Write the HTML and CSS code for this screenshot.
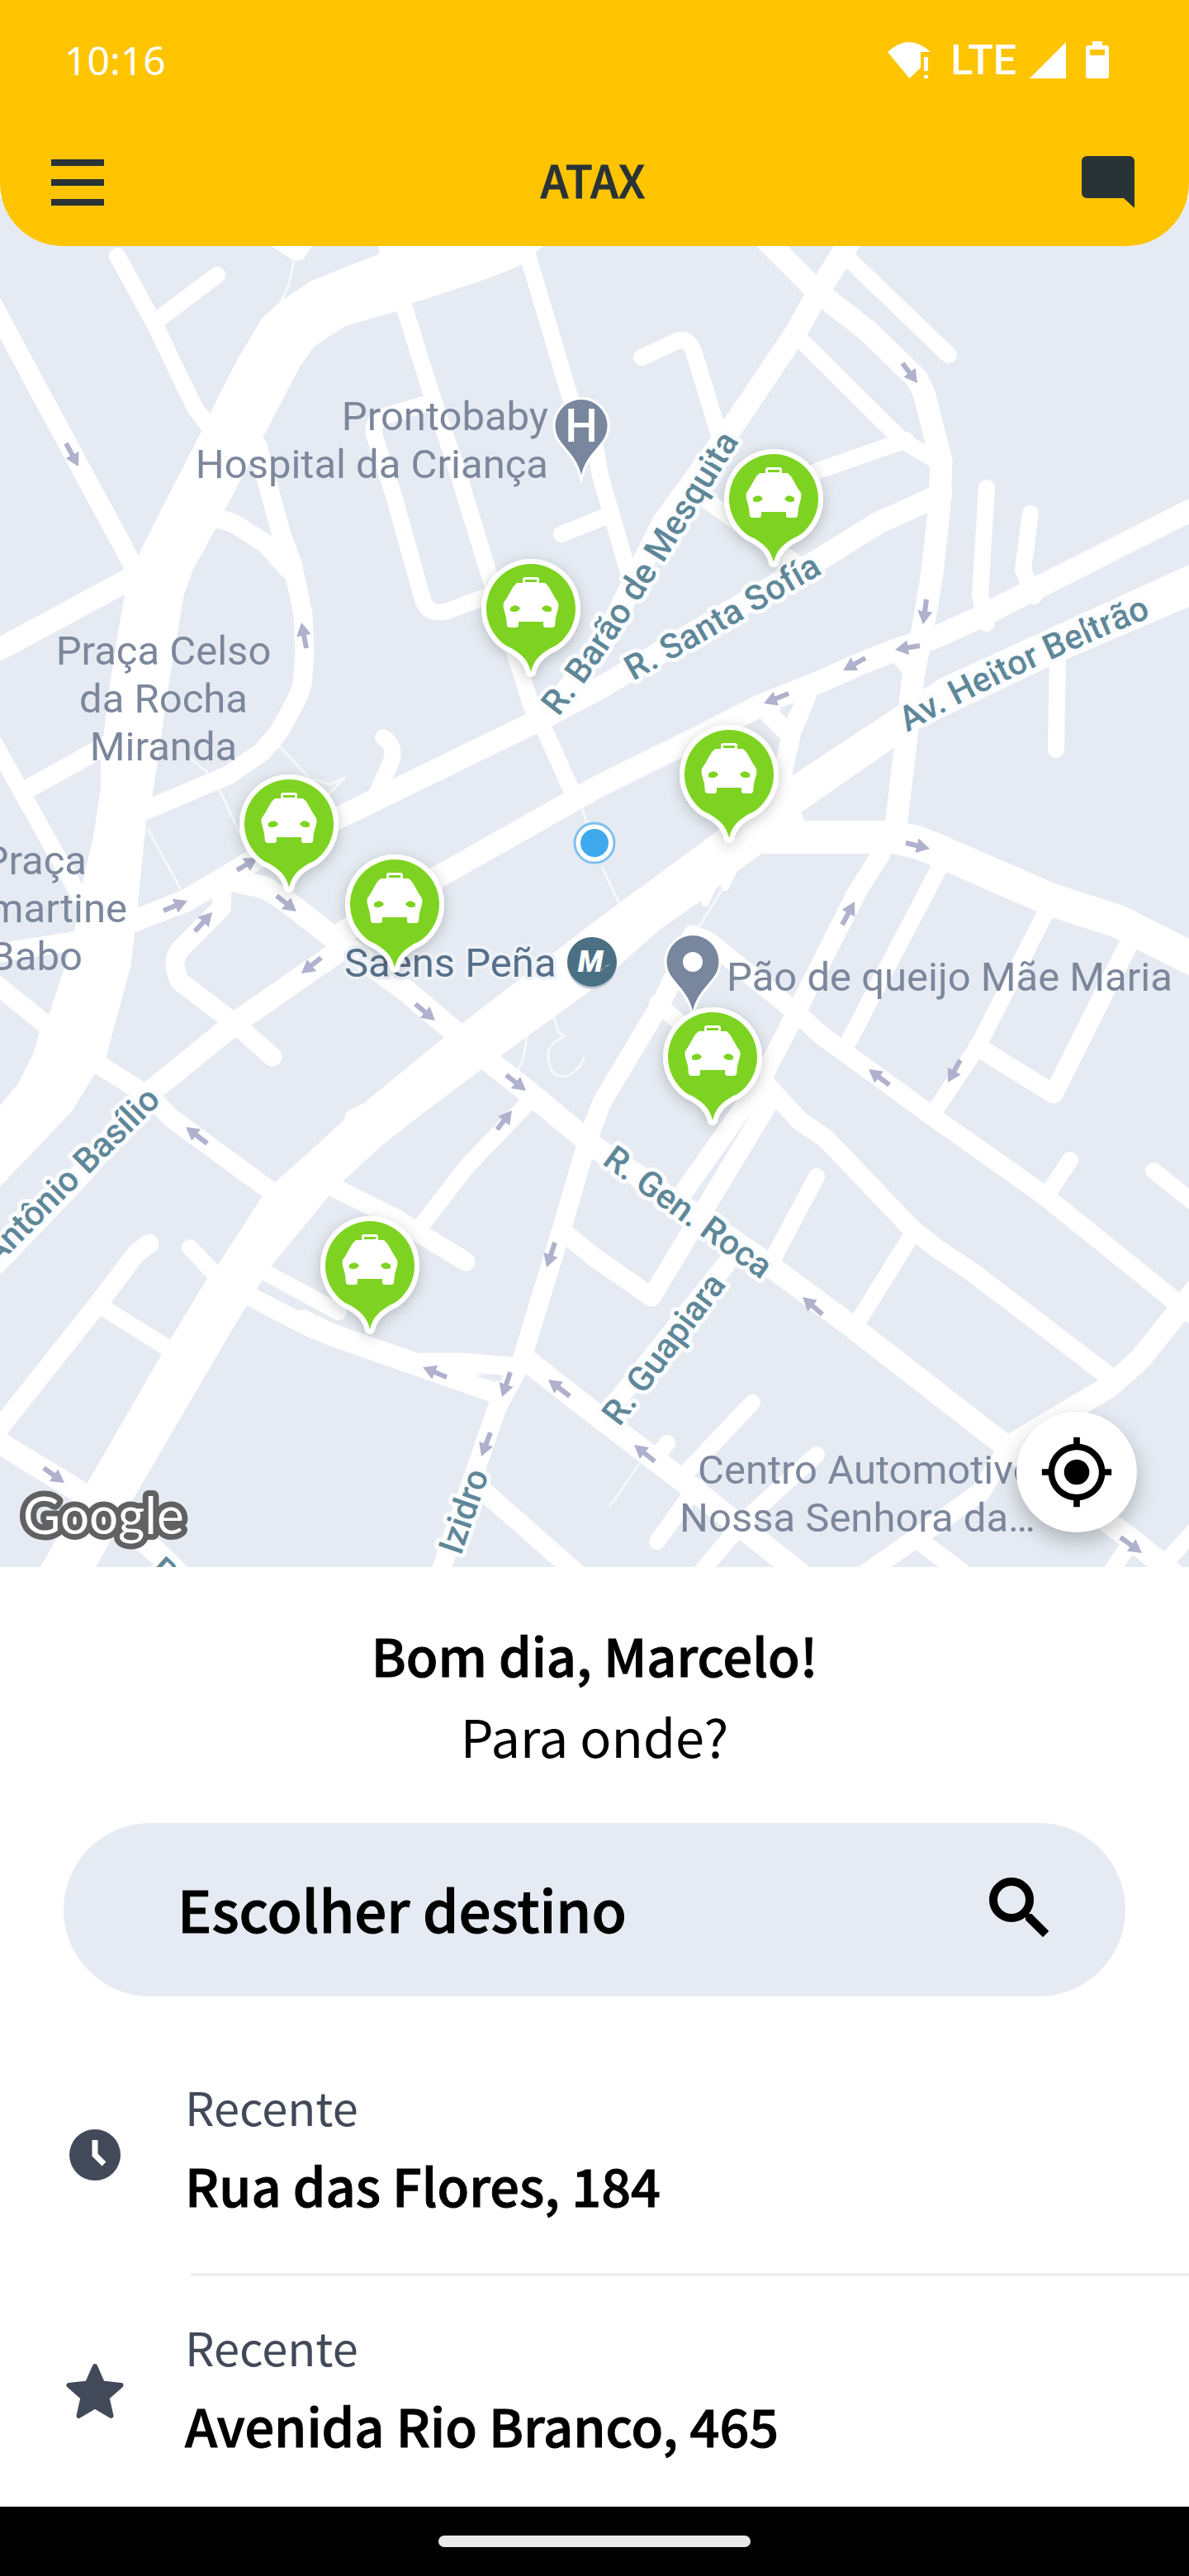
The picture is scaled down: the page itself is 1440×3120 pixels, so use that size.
FILE: index.html
```html
<!DOCTYPE html>
<html lang="pt-BR">
<head>
<meta charset="utf-8">
<meta name="viewport" content="width=device-width, initial-scale=1">
<title>ATAX</title>
<link rel="stylesheet" href="styles.css">
</head>
<body>
<header class="header">
  <div class="status">
    <time class="clock">10:16</time>
    <div class="signals">
      <svg class="wifi" viewBox="0 0 54 46" aria-hidden="true"><path d="M0 13Q26-11 52 13H40v19L26.500 45zM44 19h5v17h-5zM44 41h5v4h-5z"/></svg>
      <span class="network">LTE</span>
      <svg class="bars" viewBox="0 0 44 46" aria-hidden="true"><path d="M44 1v44H0z"/></svg>
      <svg class="battery" viewBox="0 0 28 46" aria-hidden="true"><path fill-rule="evenodd" d="M8 0h12v5h5q3 0 3 3v34q0 3-3 3H3q-3 0-3-3V8q0-3 3-3h5zM5 10v7h18v-7z"/></svg>
    </div>
  </div>
  <div class="appbar">
    <button class="icon-button" type="button" aria-label="Menu"><svg class="icon" viewBox="0 0 64 64"><path d="M0 4h64v8H0zM0 28h64v8H0zM0 52h64v8H0z"/></svg></button>
    <h1 class="brand">ATAX</h1>
    <button class="icon-button" type="button" aria-label="Mensagens"><svg class="icon" viewBox="0 0 64 64"><path d="M7 0h50q7 0 7 7v56L51 51H7q-7 0-7-7V7q0-7 7-7z"/></svg></button>
  </div>
</header>

<main>
<section class="map" aria-label="Mapa">
  <svg class="map-canvas" viewBox="0 240 1440 1658" role="img" aria-label="Mapa com táxis próximos">
    <defs>
      <marker id="head" viewBox="0 0 16 18" refX="16" refY="9" markerWidth="16" markerHeight="18" markerUnits="userSpaceOnUse" orient="auto"><path class="arrow-head" d="M0 0 16 9 0 18z"/></marker>
      <filter id="shade" x="-40%" y="-40%" width="180%" height="180%"><feDropShadow dx="0" dy="4" stdDeviation="8" flood-color="#000" flood-opacity=".22"/></filter>
      <g id="taxi">
        <path class="taxi-pin" filter="url(#shade)" d="M0 77C-3 63-12 53-30 45A54 54 0 1 1 30 45C12 53 3 63 0 77z"/>
        <path class="taxi-car" d="M-17-31H-10V-35Q-10-38-7-38H7Q10-38 10-35V-31H17Q22-27 24-22L29-13 33-7Q34-4 33 0L30 11 29 21Q28 23 26 23H18Q15 23 15 20V16H-15V20Q-15 23-18 23H-26Q-28 23-29 21L-30 11-33 0Q-34-4-33-7L-29-13-24-22Q-22-27-17-31z"/>
        <path class="taxi-light" d="M-25-1Q-18-7-13 0-17 6-25 3zM25-1Q18-7 13 0 17 6 25 3zM-7-35H7V-32H-7z"/>
      </g>
      <path id="barao" d="M676 869C742 785 778 722 905 519"/>
      <path id="sofia" d="M767 825Q882 761 1010 686"/>
      <path id="heitor" d="M1099 887Q1230 812 1420 737"/>
    </defs>

    <rect class="land" x="0" y="240" width="1440" height="1658"/>

    <g class="paths">
      <path d="M356 316 350 345 340 366M179 1004 220 1079M266 957 300 1030M338 903 375 943 400 950 418 941 398 962M230 918 252 936M705 980 712 1000M729 1050 750 1094M876 1075 845 1125M670 1228 676 1250 684 1255Q662 1266 664 1278 664 1304 684 1304 700 1300 708 1280M652 1240 638 1254Q636 1282 627 1297M775 1772 738 1825"/>
    </g>

    <g class="avenues">
      <path d="M459 290V308L422 322 377 340 340 365 317 386 289 433 257 495 246 519 202 604 168 672 154 690 152 715 142 772 133 829 129 864 122 918 122 954 113 1014 101 1064 90 1129 83 1157 60 1227 48 1250 41 1275 23 1311 0 1339V1437L46 1389 87 1346 115 1300 129 1279 158 1171 163 1132 177 995 184 966 193 907 202 843 209 801 223 719 234 690 259 644 271 620 319 529 363 444 381 419 418 395 480 377 500 367 583 340 629 322 660 296V290z"/>
      <path d="M1440 684 1138 822 1092 852 954 943 872 1004 720 1116 558 1241 537 1257 441 1336 420 1346 416 1357 377 1393 333 1432 317 1450 266 1529 250 1550 207 1621 106 1796 48 1900H115L158 1821 262 1643 298 1582 328 1534 397 1450 416 1430 464 1386 510 1350 583 1295 606 1279 720 1196 748 1171 800 1125 849 1091 894 1054 922 1034 977 1000 970 984 1085 904 1110 884 1271 807 1440 735z"/>
      <path d="M317 290H383L368 313Q360 320 350 312z"/>
    </g>

    <g class="road road-xl">
      <path d="M900 1014H1083L1110 1020 1133 1029 1271 1089 1354 1116 1450 1164"/>
    </g>
    <g class="road road-l">
      <path d="M156 1118 225 1091 276 1061 312 1039 409 991 643 877 720 837 904 729 995 676 1064 633 1140 599"/>
      <path d="M404 1136 520 1068 720 955 835 898 922 854 995 825 1051 800 1097 783 1133 772 1179 751 1450 614"/>
      <path d="M927 290 991 354 1051 401 1110 458 1119 476 1140 558 1138 611 1129 694 1119 754 1106 819 1097 900 1085 1000"/>
      <path d="M1033 286 991 354 963 404 881 526 803 633 734 772 666 864"/>
      <path d="M270 1064 321 1075 349 1093 404 1136 487 1196 551 1250 597 1289 638 1321 720 1389 927 1529 1028 1604 1211 1746 1372 1866 1420 1905"/>
      <path d="M413 1150 285 1239 179 1325 100 1420 -5 1530"/>
      <path d="M0 786 156 702"/>
      <path d="M367 1600 400 1616 606 1688"/>
      <path d="M1450 1560 1429 1586 1381 1646 1344 1679 1225 1750"/>
      <path d="M637 1647 720 1712 830 1796 968 1905"/>
      <path d="M-5 1745 115 1818 190 1880 225 1915"/>
    </g>
    <g class="road road-m">
      <path d="M312 540 324 586 342 651 354 683 367 744 369 790 366 830 358 850 338 886 317 911 276 939 175 982"/>
      <path d="M250 628Q275 628 290 638L321 658 350 690"/>
      <path d="M-8 370 9 402 165 692"/>
      <path d="M-5 1192 53 1239 119 1289 184 1330 207 1354 330 1444M400 1436 478 1475 564 1528"/>
      <path d="M269 1075 268 1100 218 1150Q206 1166 218 1189L280 1236 330 1280"/>
      <path d="M839 1132 858 1140 963 1225 995 1254 1129 1352 1262 1446 1427 1579 1455 1600"/>
      <path d="M839 1132 803 1211 729 1335 712 1380 680 1489 631 1650 602 1705 533 1905"/>
      <path d="M1085 1000 1064 1039 1037 1082 963 1229 917 1318 830 1441"/>
      <path d="M680 1490 720 1523 789 1571 851 1468 931 1336"/>
      <path d="M925 1310 968 1357 1000 1379 1103 1487 1133 1511 1175 1539 1350 1672"/>
      <path d="M1367 1143 1276 1325 1184 1268"/>
      <path d="M510 1650 560 1650 620 1655M588 1808 698 1905M181 1506 165 1518 119 1579 -5 1735M298 1568 380 1610"/>
      <path d="M1222 1750 1188 1807 1050 1905M1108 1862 1165 1905M977 843 959 886 945 950M925 858 952 886"/>
      <path d="M881 1529 730 1718"/>
      <path d="M0 1154 100 1138M38 953 130 902"/>
    </g>
    <g class="road road-s">
      <path d="M142 310 188 394 236 494 256 520M263 333 190 388"/>
      <path d="M489 370 523 479 551 561 597 711 629 808 643 854 657 879 697 968"/>
      <path d="M523 487 466 504Q450 510 453 526L478 604 512 726Q518 746 542 740L590 722"/>
      <path d="M638 305 691 483 720 536 727 576 760 690M680 647 735 625"/>
      <path d="M-15 885 0 912 96 1085M464 893Q482 905 472 926L457 960"/>
      <path d="M1025 311 1149 430M966 408 1092 533 1137 560M1097 533 991 570 900 620M850 602 975 690"/>
      <path d="M777 433 820 413Q836 408 842 432L872 530"/>
      <path d="M1195 591 1187 720 1195 755M1248 622 1239 690 1252 722M1281 795 1279 908M1080 785 1106 815"/>
      <path d="M1138 1050 1028 1261M1269 1100 1184 1268 1129 1350M796 1215 850 1262M643 1332 567 1411 512 1482"/>
      <path d="M321 1541 410 1589M122 1582 202 1632M230 1511 265 1548"/>
      <path d="M989 1425 936 1525M1106 1493 1037 1604M1296 1405 1269 1446M1397 1418 1450 1460"/>
      <path d="M911 1699 826 1789M808 1748 790 1770M844 1800 796 1867M989 1762 904 1839 848 1905M1345 1905 1363 1878M1450 1850 1400 1905"/>
      <path class="nub" d="M854 1093 868 1060M878 1074 890 1050"/>
    </g>
    <path class="land" d="M944 857 962 851 956 864zM317 1554 362 1578 357 1582 316 1562zM380 1589 386 1593 382 1595zM575 1666 602 1667 600 1674z"/>

    <g class="arrows">
      <path pathLength="10" d="M80 537 95 565"/><path pathLength="10" d="M371 785 365 754"/>
      <path pathLength="10" d="M1093 440 1111 464"/><path pathLength="10" d="M1122 726 1118 756"/>
      <path pathLength="10" d="M1114 782 1084 787"/><path pathLength="10" d="M1048 797 1021 812"/>
      <path pathLength="10" d="M955 840 925 852"/><path pathLength="10" d="M287 1054 312 1039"/>
      <path pathLength="10" d="M198 1103 227 1091"/><path pathLength="10" d="M236 1128 257 1105"/>
      <path pathLength="10" d="M335 1085 359 1104"/><path pathLength="10" d="M389 1160 365 1179"/>
      <path pathLength="10" d="M503 1216 527 1236"/><path pathLength="10" d="M613 1302 637 1321"/>
      <path pathLength="10" d="M602 1368 620 1345"/><path pathLength="10" d="M1097 1021 1126 1028"/>
      <path pathLength="10" d="M1020 1120 1035 1092"/><path pathLength="10" d="M1077 1314 1052 1295"/>
      <path pathLength="10" d="M1163 1284 1148 1311"/><path pathLength="10" d="M251 1385 225 1365"/>
      <path pathLength="10" d="M672 1505 662 1535"/><path pathLength="10" d="M541 1668 512 1656"/>
      <path pathLength="10" d="M618 1662 608 1692"/><path pathLength="10" d="M690 1691 664 1671"/>
      <path pathLength="10" d="M594 1735 583 1764"/><path pathLength="10" d="M53 1778 78 1796"/>
      <path pathLength="10" d="M996 1592 972 1571"/><path pathLength="10" d="M793 1770 768 1750"/>
      <path pathLength="10" d="M1357 1862 1383 1881"/>
    </g>

    <g class="street">
      <text><textPath href="#barao">R. Barão de Mesquita</textPath></text>
      <text><textPath href="#sofia">R. Santa Sofía</textPath></text>
      <text><textPath href="#heitor">Av. Heitor Beltrão</textPath></text>
      <text transform="translate(728 1409) rotate(36)">R. Gen. Roca</text>
      <text transform="translate(750 1729) rotate(-53)">R. Guapiara</text>
      <text transform="translate(196 1334) rotate(-45)" text-anchor="end">Antônio Basílio</text>
      <text transform="translate(558 1885) rotate(-71)">Izidro</text>
      <text transform="translate(179 1905) rotate(42)">R.</text>
    </g>
    <g class="place">
      <text x="664" y="521" text-anchor="end">Prontobaby</text>
      <text x="664" y="579" text-anchor="end">Hospital da Criança</text>
      <text x="198" y="805" text-anchor="middle">Praça Celso</text>
      <text x="198" y="863" text-anchor="middle">da Rocha</text>
      <text x="198" y="921" text-anchor="middle">Miranda</text>
      <text x="105" y="1059" text-anchor="end">Praça</text>
      <text x="154" y="1117" text-anchor="end">Lamartine</text>
      <text x="100" y="1175" text-anchor="end">Babo</text>
      <text x="880" y="1200">Pão de queijo Mãe Maria</text>
      <text x="845" y="1797">Centro Automotivo</text>
      <text x="823" y="1855">Nossa Senhora da…</text>
      <text class="station" x="417" y="1183">Saens Peña</text>
    </g>

    <g class="poi">
      <path transform="translate(704 515)" d="M0 60C-5 42-12 36-24 21A31.500 31.500 0 1 1 24 21C12 36 5 42 0 60z"/>
      <path transform="translate(839 1164)" d="M0 60C-5 42-12 36-24 21A31.500 31.500 0 1 1 24 21C12 36 5 42 0 60z"/>
      <circle class="poi-dot" cx="839" cy="1165" r="12"/>
      <text class="poi-letter" x="704" y="535" text-anchor="middle">H</text>
    </g>
    <g>
      <circle class="metro-edge" cx="717" cy="1168" r="30"/>
      <circle class="metro" cx="717" cy="1165" r="30"/>
      <text class="metro-letter" x="715" y="1177" text-anchor="middle">M</text>
      <path class="metro-tail" d="M728 1176Q733 1168 740 1168L731 1172Q730 1176 728 1176z"/>
    </g>
    <circle class="here-ring" cx="720" cy="1021" r="24"/>
    <circle class="here" cx="720" cy="1021" r="17"/>

    <use href="#taxi" x="643" y="737"/>
    <use href="#taxi" x="937" y="604"/>
    <use href="#taxi" x="350" y="998"/>
    <use href="#taxi" x="478" y="1095"/>
    <use href="#taxi" x="883" y="938"/>
    <use href="#taxi" x="863" y="1280"/>
    <use href="#taxi" x="448" y="1533"/>

    <text class="google" x="28" y="1858">Google</text>
  </svg>
  <button class="locate" type="button" aria-label="Minha localização"><svg class="locate-icon" viewBox="0 0 24 24"><path d="M12 8c-2.210 0-4 1.790-4 4s1.790 4 4 4 4-1.790 4-4-1.790-4-4-4zm8.940 3c-.46-4.170-3.770-7.480-7.940-7.940V1h-2v2.060C6.830 3.520 3.520 6.830 3.060 11H1v2h2.060c.46 4.170 3.770 7.480 7.940 7.940V23h2v-2.060c4.170-.46 7.480-3.770 7.940-7.940H23v-2h-2.060zM12 19c-3.870 0-7-3.130-7-7s3.130-7 7-7 7 3.130 7 7-3.130 7-7 7z"/></svg></button>
</section>

<section class="sheet">
  <h2 class="greeting">Bom dia, Marcelo!</h2>
  <p class="question">Para onde?</p>
  <button class="search" type="button">
    <span>Escolher destino</span>
    <svg class="search-icon" viewBox="0 0 24 24" aria-hidden="true"><path d="M15.500 14h-.79l-.28-.27C15.410 12.590 16 11.110 16 9.500 16 5.910 13.090 3 9.500 3S3 5.910 3 9.500 5.910 16 9.500 16c1.610 0 3.090-.59 4.230-1.570l.27.28v.79l5 4.990L20.490 19l-4.990-5zm-6 0C7.010 14 5 11.990 5 9.500S7.010 5 9.500 5 14 7.010 14 9.500 11.990 14 9.500 14z"/></svg>
  </button>
  <ul class="recents">
    <li><a class="recent" href="#">
      <svg class="recent-icon" viewBox="0 0 72 72" aria-hidden="true"><circle cx="36" cy="36" r="31"/><path class="hands" d="M36 18v18l11 11"/></svg>
      <span class="recent-text"><span class="recent-kind">Recente</span><span class="recent-place">Rua das Flores, 184</span></span>
    </a></li>
    <li><a class="recent" href="#">
      <svg class="recent-icon" viewBox="0 0 72 72" aria-hidden="true"><path class="star" d="M36 5 45 25.500 67.500 28 50.500 43 55.500 65 36 53.500 16.500 65 21.500 43 4.500 28 27 25.500z"/></svg>
      <span class="recent-text"><span class="recent-kind">Recente</span><span class="recent-place">Avenida Rio Branco, 465</span></span>
    </a></li>
  </ul>
</section>
</main>

<footer class="navbar"><div class="handle"></div></footer>
</body>
</html>
```
FILE: styles.css
```css
* { box-sizing: border-box; }

body {
  margin: 0;
  background: #fff;
  color: #000;
  font-family: "Noto Sans CJK SC", "Open Sans", sans-serif;
}

h1, h2, p, ul { margin: 0; padding: 0; }

button {
  border: 0;
  padding: 0;
  background: none;
  font: inherit;
  color: inherit;
  cursor: pointer;
}

svg { display: block; }

/* Header */
.header {
  position: relative;
  z-index: 1;
  background: #fec400;
  border-radius: 0 0 76px 76px;
}

.status {
  display: flex;
  align-items: center;
  justify-content: space-between;
  height: 146px;
  padding: 0 97px 0 78px;
  color: #fff;
  fill: #fff;
}

.clock { font: 400 48px/64px "Noto Sans", sans-serif; }
.signals { display: flex; align-items: center; gap: 20px; }
.network { font: 500 50px/64px Roboto, sans-serif; }
.wifi { width: 54px; height: 46px; margin-right: 2px; }
.bars { width: 44px; height: 46px; margin-left: -4px; }
.battery { width: 28px; height: 46px; margin-left: 4px; }

.appbar {
  display: flex;
  align-items: center;
  justify-content: space-between;
  height: 152px;
  padding: 0 66px 2px 62px;
  color: #293336;
}

.icon { width: 64px; height: 64px; fill: #293336; }
.brand { padding-bottom: 8px; font-size: 54px; line-height: 72px; font-weight: 500; }

/* Semibold look on top of the medium weight */
.brand, .greeting, .search, .recent-place { -webkit-text-stroke: 1px currentColor; }

/* Map */
.map { position: relative; margin-top: -58px; }
.map-canvas { width: 100%; height: auto; }
.land { fill: #e6ebf3; }
.avenues { fill: #fff; }
.paths { fill: none; stroke: #f6f8fb; stroke-width: 3; }
.road { fill: none; stroke: #fff; stroke-linecap: round; stroke-linejoin: round; }
.road-xl { stroke-width: 40; }
.road-l { stroke-width: 27; }
.road-m { stroke-width: 23; }
.road-s { stroke-width: 20; }
.nub { stroke-width: 10; }
.arrows { fill: none; stroke: #afb1cd; stroke-width: 6; stroke-dasharray: 6 10; }
.arrows path { marker-end: url(#head); }
.arrow-head { fill: #afb1cd; stroke: none; }

.place { font: 400 49px Roboto, sans-serif; fill: #7c879c; }
.station { fill: #56708a; stroke: #eef2f7; stroke-width: 8; stroke-linejoin: round; paint-order: stroke; }
.street {
  font: 500 42px Roboto, sans-serif;
  fill: #5f8798;
  stroke: #fafcfe;
  stroke-width: 10;
  stroke-linejoin: round;
  paint-order: stroke;
}

.poi { fill: #78879d; stroke: #fff; stroke-width: 6; paint-order: stroke; }
.poi-dot { fill: #fff; stroke: none; }
.poi-letter { font: 500 56px Roboto, sans-serif; fill: #fff; stroke: none; }
.metro { fill: #4b7084; }
.metro-edge { fill: #c3cbd4; }
.metro-letter { font: italic 900 36px Roboto, sans-serif; fill: #fff; }
.metro-tail { fill: #b5c6cf; }
.here { fill: #3fa9ee; }
.here-ring { fill: #fff; stroke: #7fc0ee; stroke-width: 3; }

.taxi-pin { fill: #7ed321; stroke: #fff; stroke-width: 12; stroke-linejoin: round; paint-order: stroke; }
.taxi-car { fill: #fff; }
.taxi-light { fill: #7ed321; }

.google {
  font: 400 62px Lato, sans-serif;
  fill: #fff;
  stroke: #616163;
  stroke-width: 14;
  stroke-linejoin: round;
  paint-order: stroke;
}

.locate {
  position: absolute;
  right: 63px;
  bottom: 42px;
  display: grid;
  place-items: center;
  width: 146px;
  height: 146px;
  border-radius: 50%;
  background: #fff;
  box-shadow: 0 10px 24px rgba(0, 0, 0, .25);
}

.locate-icon { width: 92px; height: 92px; }

/* Bottom sheet */
.sheet { padding-top: 57px; }
.greeting, .question { font-size: 63px; line-height: 98px; text-align: center; }
.greeting { font-weight: 500; }
.question { font-weight: 400; }

.search {
  display: flex;
  align-items: center;
  justify-content: space-between;
  width: calc(100% - 154px);
  height: 210px;
  margin: 57px 77px 48px;
  padding: 0 80px 4px 138px;
  border-radius: 105px;
  background: #e6ebf3;
  font-size: 69px;
  line-height: 96px;
  font-weight: 500;
}

.search-icon { width: 96px; height: 96px; stroke: #000; stroke-width: 0.5; }

.recents { list-style: none; }
.recents li + li::before { content: ""; display: block; height: 4px; margin-left: 231px; background: #eee; }

.recent {
  display: flex;
  align-items: center;
  gap: 73px;
  padding-left: 79px;
  color: #000;
  text-decoration: none;
}

.recent-icon { width: 72px; height: 72px; fill: #424959; }
.hands { fill: none; stroke: #fff; stroke-width: 7; }
.star { stroke: #424959; stroke-width: 6; stroke-linejoin: round; }
.recent-text { flex: 1; display: flex; flex-direction: column; padding: 40px 0 49px; }
li:first-child .recent-text { padding-bottom: 57px; }
.recent-kind { font-size: 56px; line-height: 90px; color: #424959; }
.recent-place { font-size: 63px; line-height: 100px; font-weight: 500; }

/* System navigation */
.navbar { display: flex; justify-content: center; padding: 35px 0; background: #000; }
.handle { width: 378px; height: 14px; border-radius: 7px; background: #e9e9e9; }
```
